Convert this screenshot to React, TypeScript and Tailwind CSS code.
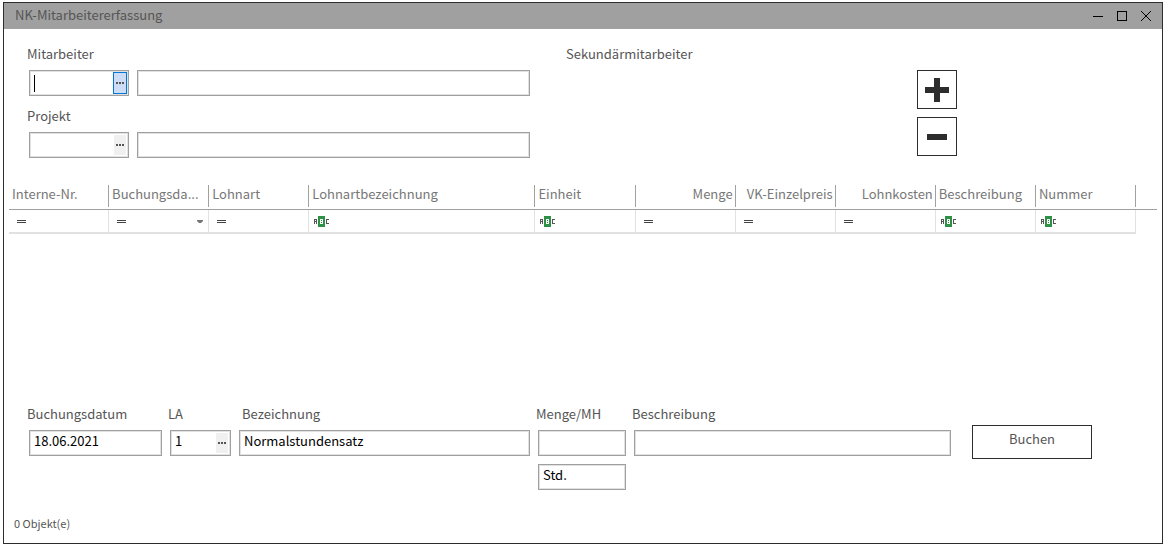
import type { ReactNode } from "react";

const columns = [
  { title: "Interne-Nr.", filter: "eq" },
  { title: "Buchungsda...", filter: "date" },
  { title: "Lohnart", filter: "eq" },
  { title: "Lohnartbezeichnung", filter: "text" },
  { title: "Einheit", filter: "text" },
  { title: "Menge", filter: "eq", right: true },
  { title: "VK-Einzelpreis", filter: "eq", right: true },
  { title: "Lohnkosten", filter: "eq", right: true },
  { title: "Beschreibung", filter: "text" },
  { title: "Nummer", filter: "text" },
];

function LookupButton({ label, active }: { label: string; active?: boolean }) {
  return (
    <button
      type="button"
      aria-label={label}
      className={
        active
          ? "flex h-[22px] w-3.5 shrink-0 items-center justify-center border border-[#0078d7] bg-[#cdddf7]"
          : "flex h-[22px] w-3.5 shrink-0 items-center justify-center border border-white bg-[#f0f0f0]"
      }
    >
      <svg width="8" height="2" viewBox="0 0 8 2" fill="#555555" shapeRendering="crispEdges">
        <rect width="2" height="2" />
        <rect x="3" width="2" height="2" />
        <rect x="6" width="2" height="2" />
      </svg>
    </button>
  );
}

type BoxProps = {
  id: string;
  value?: string;
  label?: string;
  caret?: boolean;
  children?: ReactNode;
};

function Box({ id, value = "", label, caret, children }: BoxProps) {
  return (
    <div className="flex h-[26px] w-full min-w-0 items-center border border-[#a0a0a0] bg-white px-px shadow-[inset_0_0_0_1px_#e1e1e1]">
      {caret && <span className="ml-[3px] h-[17px] w-px shrink-0 bg-black" />}
      <input
        id={id}
        type="text"
        aria-label={label}
        defaultValue={value}
        className="h-5 w-0 min-w-0 flex-1 bg-transparent pb-1.5 pl-[3px] text-[13px] leading-4 text-black outline-none"
      />
      {children}
    </div>
  );
}

function Label({ htmlFor, indent, children }: { htmlFor: string; indent?: boolean; children: ReactNode }) {
  return (
    <label
      htmlFor={htmlFor}
      className={indent ? "ml-[3px] block text-[13px] leading-5 whitespace-nowrap" : "-ml-0.5 block text-[13px] leading-5 whitespace-nowrap"}
    >
      {children}
    </label>
  );
}

function FilterIcon({ kind }: { kind: string }) {
  if (kind === "text") {
    return (
      <svg width="16" height="11" viewBox="0 0 16 11" shapeRendering="crispEdges">
        <path d="M0 3h3v5h-1v-2h-1v2h-1zM1 4v1h1v-1z" fill="#555555" fillRule="evenodd" />
        <rect x="4" width="7" height="11" fill="#2f9148" />
        <path d="M6 3h3v5h-3zM7 4v1h1v-1zM7 6v1h1v-1z" fill="#fff" fillRule="evenodd" />
        <path d="M12 3h3v1h-2v3h2v1h-3z" fill="#555555" />
      </svg>
    );
  }
  return (
    <svg width="9" height="3" viewBox="0 0 9 3" fill="#444444" shapeRendering="crispEdges">
      <rect width="9" height="1" />
      <rect y="2" width="9" height="1" />
    </svg>
  );
}

function TitleBar() {
  return (
    <header className="flex h-[26px] items-center justify-between bg-[#a0a0a0] pr-[11px] pl-[11px]">
      <h1 className="pb-0.5 text-[13px] leading-5 text-[#555555]">NK-Mitarbeitererfassung</h1>
      <div className="flex items-center gap-3.5">
        <button type="button" aria-label="Minimieren">
          <svg className="block" width="10" height="10" shapeRendering="crispEdges">
            <rect y="5" width="10" height="1" />
          </svg>
        </button>
        <button type="button" aria-label="Maximieren">
          <svg className="block" width="10" height="10" fill="none" stroke="#000" shapeRendering="crispEdges">
            <rect x="0.5" y="0.5" width="9" height="9" />
          </svg>
        </button>
        <button type="button" aria-label="Schließen">
          <svg className="block" width="10" height="10" stroke="#000">
            <path d="M0 0l10 10M10 0L0 10" />
          </svg>
        </button>
      </div>
    </header>
  );
}

function BookingTable() {
  return (
    <table className="w-full table-fixed border-separate border-spacing-0">
      <colgroup>
        {columns.map((c) => (
          <col key={c.title} className={c.title === "Lohnartbezeichnung" ? "w-[19.7%]" : "w-[8.72%]"} />
        ))}
        <col />
      </colgroup>
      <thead>
        <tr>
          {columns.map((c) => (
            <th key={c.title} className="border-b border-[#a0a0a0] p-0 pb-0.5 font-normal">
              <div
                className={
                  c.right
                    ? "h-[22px] border-r border-[#a0a0a0] pr-0.5 text-right text-[13px] leading-[18px] whitespace-nowrap text-[#777777]"
                    : "h-[22px] border-r border-[#a0a0a0] pl-[3px] text-left text-[13px] leading-[18px] whitespace-nowrap text-[#777777]"
                }
              >
                {c.title}
              </div>
            </th>
          ))}
          <td className="border-b border-[#a0a0a0] p-0" />
        </tr>
      </thead>
      <tbody>
        <tr>
          {columns.map((c) => (
            <td key={c.title} className="h-6 border-r border-b-2 border-[#e1e1e1] p-0">
              <div className={c.filter === "text" ? "flex items-center justify-between pl-[5px]" : "flex items-center justify-between pr-[5px] pl-2"}>
                <FilterIcon kind={c.filter} />
                {c.filter === "date" && (
                  <svg width="6" height="3" viewBox="0 0 6 3" fill="#777777">
                    <path d="M0 0h6v1L4 3H2L0 1z" />
                  </svg>
                )}
              </div>
            </td>
          ))}
          <td className="p-0" />
        </tr>
      </tbody>
    </table>
  );
}

export default function App() {
  return (
    <div className="flex min-h-screen bg-white pt-0.5 pr-[3px] pb-1 pl-[3px] font-['Noto_Sans_CJK_SC',sans-serif] text-[#555555]">
      <main className="flex min-w-0 flex-1 flex-col border border-[#2d2d2d]">
        <TitleBar />

        <section className="grid grid-cols-[501fr_391fr_164fr] gap-9 pt-[15px] pr-[5px] pl-[25px]">
          <div>
            <Label htmlFor="mitarbeiter">Mitarbeiter</Label>
            <div className="mt-1.5 grid grid-cols-[100px_1fr] gap-2">
              <Box id="mitarbeiter" caret>
                <LookupButton label="Mitarbeiter suchen" active />
              </Box>
              <Box id="mitarbeiter-name" label="Mitarbeitername" />
            </div>
            <div className="mt-2.5">
              <Label htmlFor="projekt">Projekt</Label>
            </div>
            <div className="mt-1.5 grid grid-cols-[100px_1fr] gap-2">
              <Box id="projekt">
                <LookupButton label="Projekt suchen" />
              </Box>
              <Box id="projekt-name" label="Projektname" />
            </div>
          </div>
          <div className="flex justify-between">
            <h2 className="text-[13px] leading-5">Sekundärmitarbeiter</h2>
            <div className="flex flex-col gap-2 pt-[26px]">
              <button type="button" aria-label="Hinzufügen" className="flex h-[39px] w-10 items-center justify-center border border-[#2d2d2d]">
                <svg width="24" height="24" fill="#2d2d2d" shapeRendering="crispEdges">
                  <path d="M9 0h6v9h9v6h-9v9h-6v-9h-9v-6h9z" />
                </svg>
              </button>
              <button type="button" aria-label="Entfernen" className="flex h-[39px] w-10 items-center justify-center border border-[#2d2d2d]">
                <svg width="20" height="6" fill="#2d2d2d" shapeRendering="crispEdges">
                  <rect width="20" height="6" />
                </svg>
              </button>
            </div>
          </div>
        </section>

        <section className="flex-1 px-[5px] pt-[27px]">
          <BookingTable />
        </section>

        <section className="flex items-start pr-[70px] pl-[25px]">
          <div className="grid min-w-0 flex-1 grid-cols-[133fr_61fr_291fr_88fr_317fr] gap-x-2">
            <div className="min-w-0 space-y-1.5">
              <Label htmlFor="datum">Buchungsdatum</Label>
              <Box id="datum" value="18.06.2021" />
            </div>
            <div className="min-w-0 space-y-1.5">
              <Label htmlFor="la">LA</Label>
              <Box id="la" value="1">
                <LookupButton label="Lohnart suchen" />
              </Box>
            </div>
            <div className="min-w-0 space-y-1.5">
              <Label htmlFor="bezeichnung" indent>Bezeichnung</Label>
              <Box id="bezeichnung" value="Normalstundensatz" />
            </div>
            <div className="min-w-0 space-y-1.5">
              <Label htmlFor="menge">Menge/MH</Label>
              <Box id="menge" />
              <div className="pt-0.5">
                <Box id="einheit" value="Std." label="Einheit" />
              </div>
            </div>
            <div className="min-w-0 space-y-1.5">
              <Label htmlFor="beschreibung">Beschreibung</Label>
              <Box id="beschreibung" />
            </div>
          </div>
          <button type="button" className="mt-[21px] ml-[21px] h-[34px] w-[120px] border border-[#2d2d2d] pb-1.5 text-[13px] leading-5">
            Buchen
          </button>
        </section>

        <footer className="px-2.5 pt-[23px] pb-2.5 text-[11px] leading-5">0 Objekt(e)</footer>
      </main>
    </div>
  );
}
